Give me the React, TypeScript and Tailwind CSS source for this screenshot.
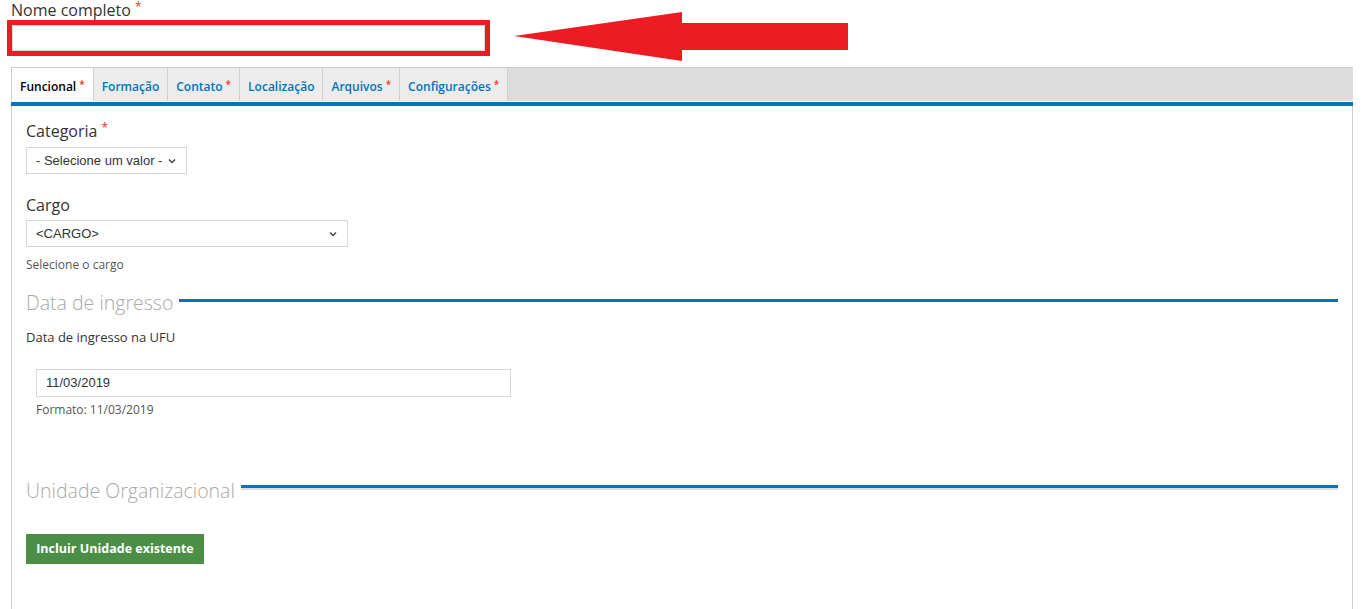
import React from 'react';

const tabs = [
  { label: 'Funcional', required: true, active: true },
  { label: 'Formação', required: false },
  { label: 'Contato', required: true },
  { label: 'Localização', required: false },
  { label: 'Arquivos', required: true },
  { label: 'Configurações', required: true },
];

function Star({ small }: { small?: boolean }) {
  return (
    <span
      className={`relative text-[#e32] leading-none ${small ? 'ml-[3px] text-[10px] -top-[3px]' : 'text-[12px] -top-[5px]'}`}
    >
      *
    </span>
  );
}

function Chevron() {
  return (
    <svg width="8" height="6" viewBox="0 0 8 6" className="pointer-events-none">
      <path d="M1 1.5 L4 4.5 L7 1.5" fill="none" stroke="#444" strokeWidth="1.5" />
    </svg>
  );
}

function FakeSelect({ value, width }: { value: string; width: string }) {
  return (
    <div
      className={`${width} h-[27px] flex items-center justify-between border border-[#d6d6d6] bg-white pl-[9px] pr-[10px] text-[13px] text-[#333] font-['Liberation_Sans',Arial,sans-serif]`}
    >
      <span>{value}</span>
      <Chevron />
    </div>
  );
}

function Legend({ title, lineTop, withShadow }: { title: string; lineTop: string; withShadow?: boolean }) {
  return (
    <div className="flex items-start h-[28px]">
      <span className="text-[19.5px] leading-[28px] font-light text-[#a9a9a9] whitespace-nowrap">{title}</span>
      <div className={`flex-1 ml-[6px] ${lineTop}`}>
        <div className="h-[3px] bg-[#0074bd]" />
        {withShadow && <div className="h-[2px] bg-[#dcdcdc]" />}
      </div>
    </div>
  );
}

export default function App() {
  return (
    <div className="relative min-h-[609px] flex flex-col bg-white text-[#333] font-['Open_Sans','Noto_Sans',sans-serif]">
      {/* topo: nome completo com destaque */}
      <div className="pl-[11px] pt-[1px]">
        <label className="block text-[16px] leading-[19px]">
          Nome completo <Star />
        </label>
      </div>
      <div className="ml-[7px] w-[483px] h-[36px] border-[5px] border-[#ed1c24] bg-white">
        <div className="h-full border border-[#d9d9d9] bg-white" />
      </div>
      <svg
        className="absolute left-[514px] top-[12px]"
        width="335"
        height="50"
        viewBox="0 0 335 50"
      >
        <polygon points="0,24 168,0 168,11 334,11 334,38 168,38 168,49" fill="#ed1c24" />
      </svg>

      {/* abas */}
      <div className="mt-[11px] ml-[11px] mr-[12px]">
        <div className="flex h-[34px] bg-[#dddddd] border-t border-l border-[#cccccc]">
          {tabs.map((t) => (
            <div
              key={t.label}
              className={`flex items-center px-[8px] pt-[5px] border-r border-[#cfcfcf] text-[12px] font-semibold ${
                t.active ? 'bg-white text-black' : 'bg-[#ececec] text-[#0074bd]'
              }`}
            >
              {t.label}
              {t.required && <Star small />}
            </div>
          ))}
        </div>
        <div className="h-px bg-white" />
        <div className="h-[4px] bg-[#0074bd]" />
      </div>

      {/* painel */}
      <div className="flex-1 ml-[11px] mr-[12px] border-l border-r border-[#cccccc] pl-[14px] pr-[14px] pt-[14px]">
        <label className="block text-[16px] leading-[22px]">
          Categoria <Star />
        </label>
        <div className="mt-[5px]">
          <FakeSelect value="- Selecione um valor -" width="w-[161px]" />
        </div>

        <label className="block mt-[20px] text-[16px] leading-[22px]">Cargo</label>
        <div className="mt-[4px]">
          <FakeSelect value="<CARGO>" width="w-[322px]" />
        </div>
        <p className="mt-[9px] text-[12px] leading-[18px] text-[#555]">Selecione o cargo</p>

        <div className="mt-[15px]">
          <Legend title="Data de ingresso" lineTop="mt-[10px]" />
        </div>
        <p className="mt-[10px] text-[13px] leading-[20px]">Data de ingresso na UFU</p>
        <div className="ml-[10px] mt-[22px] w-[475px] h-[28px] flex items-center border border-[#d6d6d6] pl-[9px] text-[13px] font-['Liberation_Sans',Arial,sans-serif]">
          11/03/2019
        </div>
        <p className="ml-[10px] mt-[4px] text-[12px] leading-[18px] text-[#555]">Formato: 11/03/2019</p>

        <div className="mt-[58px]">
          <Legend title="Unidade Organizacional" lineTop="mt-[8px]" withShadow />
        </div>

        <button className="mt-[29px] h-[30px] w-[178px] bg-[#4b8f46] text-white text-[12.5px] font-bold">
          Incluir Unidade existente
        </button>
      </div>
    </div>
  );
}
